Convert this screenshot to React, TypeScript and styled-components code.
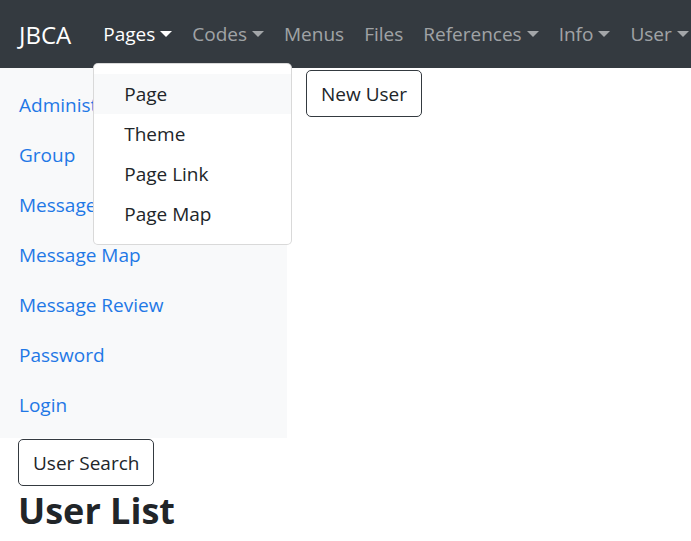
import React from "react";
import styled, { createGlobalStyle } from "styled-components";

const GlobalStyle = createGlobalStyle`
  body {
    margin: 0;
    font-family: "Open Sans", "Noto Sans", sans-serif;
    font-size: 19px;
    color: #212529;
    background: #fff;
  }
`;

const navItems = [
  { label: "Pages", caret: true, active: true },
  { label: "Codes", caret: true },
  { label: "Menus" },
  { label: "Files" },
  { label: "References", caret: true },
  { label: "Info", caret: true },
  { label: "User", caret: true },
];

const sideItems = [
  "Administration",
  "Group",
  "Message",
  "Message Map",
  "Message Review",
  "Password",
  "Login",
];

const dropItems = ["Page", "Theme", "Page Link", "Page Map"];

const App: React.FC = () => {
  return (
    <>
      <GlobalStyle />
      <NavBar>
        <Brand>JBCA</Brand>
        <NavList>
          {navItems.map((item) => (
            <NavItem key={item.label}>
              <NavLink $active={item.active}>
                {item.label}
                {item.caret && <Caret />}
              </NavLink>
              {item.active && (
                <DropMenu>
                  {dropItems.map((d, i) => (
                    <DropItem key={d} $hover={i === 0}>
                      {d}
                    </DropItem>
                  ))}
                </DropMenu>
              )}
            </NavItem>
          ))}
        </NavList>
      </NavBar>
      <Body>
        <SideBar>
          {sideItems.map((s) => (
            <SideLink key={s}>{s}</SideLink>
          ))}
        </SideBar>
        <Main>
          <OutlineButton>New User</OutlineButton>
        </Main>
      </Body>
      <Content>
        <OutlineButton>User Search</OutlineButton>
        <Heading>User List</Heading>
      </Content>
    </>
  );
};

export default App;

const NavBar = styled.nav`
  height: 68px;
  background: #343a40;
  display: flex;
  align-items: center;
  padding: 0 10px 0 19px;
  box-sizing: border-box;
  position: relative;
  z-index: 2;
`;
const Brand = styled.div`
  color: #fff;
  font-size: 24px;
  margin-right: 22px;
  white-space: nowrap;
`;
const NavList = styled.ul`
  display: flex;
  list-style: none;
  margin: 0;
  padding: 0;
`;
const NavItem = styled.li`
  position: relative;
`;
const NavLink = styled.div<{ $active?: boolean }>`
  padding: 0 10px;
  line-height: 30px;
  white-space: nowrap;
  color: ${(p) => (p.$active ? "#fff" : "rgba(255,255,255,0.55)")};
`;
const Caret = styled.span`
  display: inline-block;
  margin-left: 5px;
  vertical-align: 4px;
  border-top: 6px solid;
  border-left: 6px solid transparent;
  border-right: 6px solid transparent;
`;
const DropMenu = styled.div`
  position: absolute;
  top: 44px;
  left: 0;
  width: 199px;
  box-sizing: border-box;
  padding: 10px 0;
  background: #fff;
  border: 1px solid rgba(0, 0, 0, 0.15);
  border-radius: 5px;
`;
const DropItem = styled.div<{ $hover?: boolean }>`
  padding: 5px 30px;
  line-height: 30px;
  color: #212529;
  background: ${(p) => (p.$hover ? "#f8f9fa" : "transparent")};
`;
const Body = styled.div`
  display: flex;
  align-items: flex-start;
`;
const SideBar = styled.div`
  width: 287px;
  background: #f8f9fa;
  padding: 12px 0 8px;
`;
const SideLink = styled.div`
  padding: 10px 19px;
  line-height: 30px;
  color: #1f78e6;
`;
const Main = styled.div`
  padding: 2px 19px;
`;
const OutlineButton = styled.button`
  font-family: inherit;
  font-size: 19px;
  line-height: 30px;
  color: #212529;
  background: #fff;
  border: 1px solid #343a40;
  border-radius: 5px;
  padding: 7.5px 14px;
`;
const Content = styled.div`
  padding: 1px 18px 0;
`;
const Heading = styled.h1`
  margin: 0;
  font-size: 36px;
  font-weight: 700;
  line-height: 50px;
`;
